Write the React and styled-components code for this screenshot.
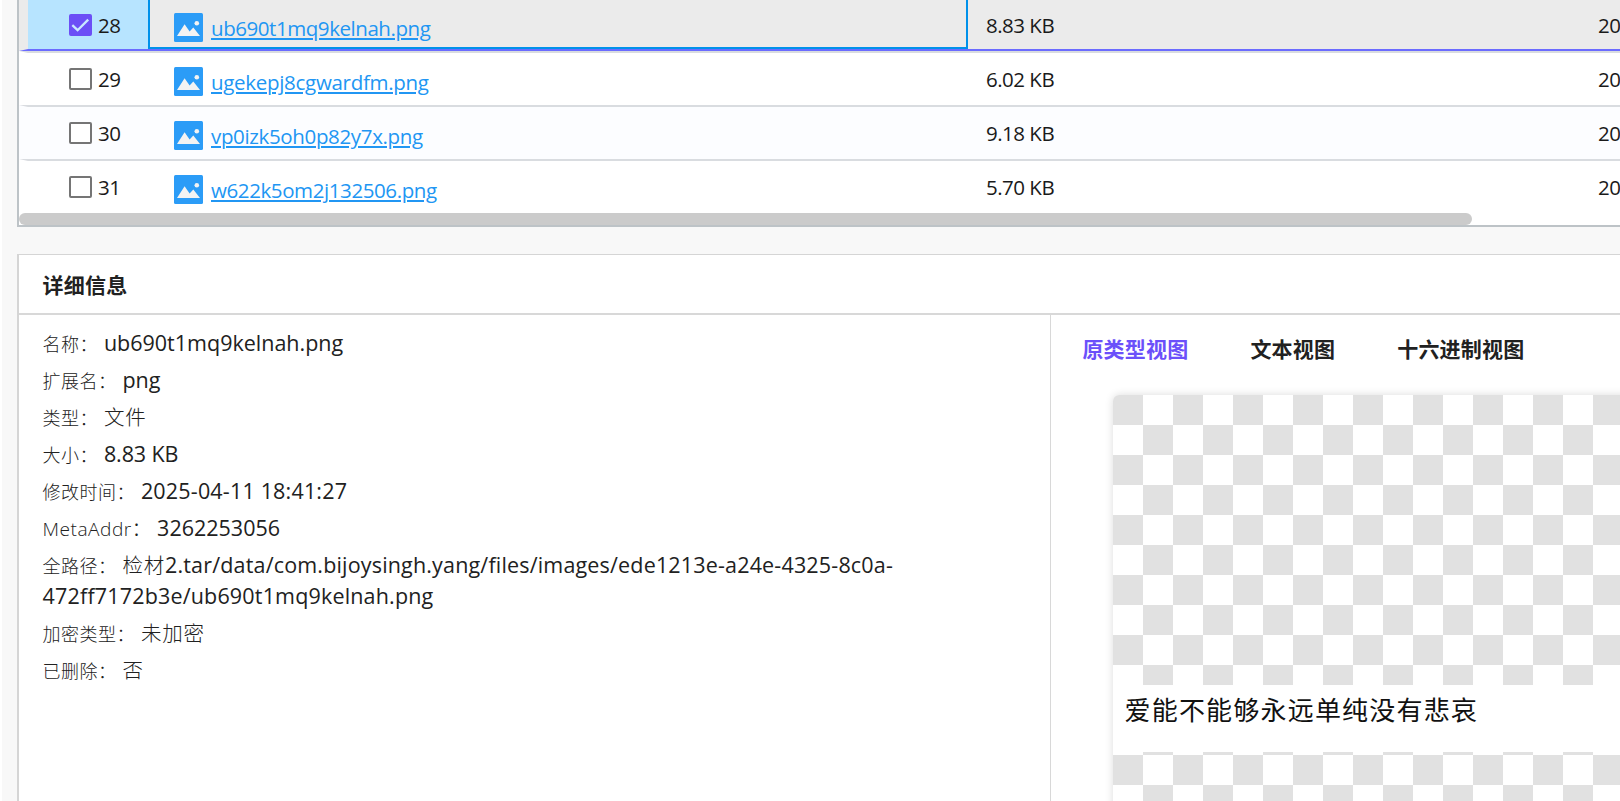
import React from 'react';
import styled, { createGlobalStyle, css } from 'styled-components';

const GlobalStyle = createGlobalStyle`
  * {
    box-sizing: border-box;
  }
  body {
    margin: 0;
    background-color: #fff;
    color: #212121;
    font-family: "Open Sans", "Noto Sans CJK SC", sans-serif;
    overflow: hidden;
  }
`;

const Page = styled.div`
  height: 801px;
  margin-left: 2px;
  padding-left: 15px;
  background-color: #f8f8f8;
  display: flex;
  flex-direction: column;
  overflow: hidden;
`;

const Grid = styled.div`
  height: 227px;
  flex-shrink: 0;
  background-color: #fff;
  border-left: 2px solid #bdc3c7;
  border-bottom: 2px solid #bdc3c7;
  display: flex;
  flex-direction: column;
  justify-content: flex-end;
  overflow: hidden;
`;

const Row = styled.div`
  height: 54px;
  flex-shrink: 0;
  display: flex;
  border-top: 2px solid #d9dce0;
  border-left: 9px solid transparent;
  background-color: ${props => (props.$odd ? '#fcfdff' : '#fff')};
  ${props => props.$selected && css`
    background-color: #ebebeb;
    border-bottom: 2px solid #6b6bff;
  `}
`;

const Cell = styled.div`
  display: flex;
  align-items: flex-start;
  flex-shrink: 0;
  width: ${props => props.$width}px;
  padding-left: ${props => props.$pad}px;
  background-color: ${props => props.$bg || 'transparent'};
  font-size: 20.5px;
  letter-spacing: -0.5px;
  line-height: 28px;
  color: #1a1a1a;
`;

const NameCell = styled(Cell)`
  border: 2px solid ${props => (props.$active ? '#0091ea' : 'transparent')};
  border-top: 0;
`;

const Checkbox = styled.span`
  width: 23px;
  height: 22px;
  margin: 15px 6px 0 0;
  flex-shrink: 0;
  border: 2px solid ${props => (props.$checked ? '#6c4ef6' : '#757575')};
  border-radius: 2px;
  background-color: ${props => (props.$checked ? '#6c4ef6' : '#fff')};
  svg {
    display: block;
  }
`;

const CellText = styled.span`
  margin-top: 12px;
`;

const FileLink = styled.a`
  margin: 15px 0 0 8px;
  color: #2196f3;
  letter-spacing: ${props => props.$spacing}px;
  text-decoration: underline;
  text-decoration-thickness: 2px;
  text-underline-offset: 2px;
`;

const Icon = styled.svg`
  display: block;
  flex-shrink: 0;
  margin-top: 14px;
`;

const ScrollTrack = styled.div`
  height: 12px;
  flex-shrink: 0;
`;

const ScrollThumb = styled.div`
  width: 1453px;
  height: 12px;
  border-radius: 6px;
  background-color: #cbcbcb;
`;

const Panel = styled.div`
  flex: 1;
  margin-top: 27px;
  background-color: #fff;
  border-top: 1px solid #d5d5d5;
  border-left: 2px solid #d5d5d5;
  display: flex;
  flex-direction: column;
`;

const PanelHeader = styled.div`
  height: 60px;
  flex-shrink: 0;
  padding: 15px 0 0 23.6px;
  border-bottom: 2px solid #d8d8d8;
  font-size: 21px;
  font-weight: 700;
  letter-spacing: 0.25px;
  line-height: 30px;
`;

const PanelBody = styled.div`
  flex: 1;
  display: flex;
  min-height: 0;
`;

const Details = styled.div`
  width: 1032px;
  flex-shrink: 0;
  padding: 12px 120px 0 23.6px;
  border-right: 1px solid #d8d8d8;
`;

const Item = styled.div`
  margin-bottom: 6px;
  font-size: 21.5px;
  line-height: 31px;
`;

const Label = styled.span`
  font-size: ${props => (props.$latin ? 19.1 : 18)}px;
  font-weight: 300;
  letter-spacing: 0.5px;
  line-height: 1;
  margin-right: 5.8px;
`;

const Value = styled.span`
  letter-spacing: ${props => props.$spacing ?? 0}px;
`;

const LightValue = styled.span`
  font-size: 20.5px;
  font-weight: 300;
  letter-spacing: 0.8px;
  line-height: 1;
`;

const Viewer = styled.div`
  flex: 1;
  min-width: 0;
  overflow: hidden;
`;

const Tabs = styled.div`
  display: flex;
  gap: 62px;
  height: 80px;
  padding: 19px 0 0 31.4px;
`;

const Tab = styled.div`
  flex-shrink: 0;
  color: ${props => (props.$active ? '#6b50fa' : '#212121')};
  font-size: 21px;
  font-weight: 700;
  letter-spacing: 0.2px;
  line-height: 30px;
`;

const Preview = styled.div`
  height: 440px;
  width: 600px;
  margin-left: 62px;
  padding-top: 290px;
  border-radius: 6px;
  box-shadow: 0 0 8px rgba(0, 0, 0, 0.14);
  background: repeating-conic-gradient(#fff 0 25%, #e1e1e1 0 50%) 0 0 / 60px 60px;
`;

const ImageText = styled.div`
  height: 67px;
  padding: 5px 0 0 11.5px;
  background-color: #fff;
  color: #111;
  font-family: "Noto Sans CJK SC", sans-serif;
  font-size: 26px;
  letter-spacing: 1.2px;
  line-height: 38px;
`;

const files = [
  { id: 28, name: 'ub690t1mq9kelnah.png', size: '8.83 KB', spacing: -0.44, selected: true },
  { id: 29, name: 'ugekepj8cgwardfm.png', size: '6.02 KB', spacing: -0.3 },
  { id: 30, name: 'vp0izk5oh0p82y7x.png', size: '9.18 KB', spacing: -0.35 },
  { id: 31, name: 'w622k5om2j132506.png', size: '5.70 KB', spacing: -0.4 },
];

const details = [
  { label: '名称：', value: 'ub690t1mq9kelnah.png' },
  { label: '扩展名：', value: 'png' },
  { label: '类型：', prefix: '文件' },
  { label: '大小：', value: '8.83 KB', spacing: -0.1 },
  { label: '修改时间：', value: '2025-04-11 18:41:27', spacing: 0.18 },
  { label: 'MetaAddr：', value: '3262253056', latin: true },
  {
    label: '全路径：',
    prefix: '检材',
    value: '2.tar/data/com.bijoysingh.yang/files/images/ede1213e-a24e-4325-8c0a-472ff7172b3e/ub690t1mq9kelnah.png',
    spacing: 0.17,
  },
  { label: '加密类型：', prefix: '未加密' },
  { label: '已删除：', prefix: '否' },
];

const tabs = ['原类型视图', '文本视图', '十六进制视图'];

const ImageIcon = () => (
  <Icon width="29" height="29" viewBox="0 0 29 29">
    <rect width="29" height="29" rx="1.5" fill="#2b9cf7" />
    <path d="M3 23 L10.6 11.3 L15.6 18.4 L19.3 14.6 L26 23 Z" fill="#f3f3f3" />
    <circle cx="22.8" cy="10.2" r="2.3" fill="#f3f3f3" />
  </Icon>
);

const Check = () => (
  <svg width="19" height="18" viewBox="0 0 19 18">
    <path d="M1.3 9.2 L6.6 14.2 L17.2 3.6" fill="none" stroke="#c9e8ff" strokeWidth="2.3" />
  </svg>
);

export default () => (
  <Page>
    <GlobalStyle />
    <Grid>
      {files.map((file, index) => (
        <Row key={file.id} $selected={file.selected} $odd={index === 2}>
          <Cell $width={120} $pad={41} $bg={file.selected && '#b7e4ff'}>
            <Checkbox $checked={file.selected}>{file.selected && <Check />}</Checkbox>
            <CellText>{file.id}</CellText>
          </Cell>
          <NameCell $width={820} $pad={24} $active={file.selected}>
            <ImageIcon />
            <FileLink $spacing={file.spacing}>{file.name}</FileLink>
          </NameCell>
          <Cell $width={612} $pad={18}>
            <CellText>{file.size}</CellText>
          </Cell>
          <Cell $width={40} $pad={18}>
            <CellText>20</CellText>
          </Cell>
        </Row>
      ))}
      <ScrollTrack>
        <ScrollThumb />
      </ScrollTrack>
    </Grid>
    <Panel>
      <PanelHeader>详细信息</PanelHeader>
      <PanelBody>
        <Details>
          {details.map(item => (
            <Item key={item.label}>
              <Label $latin={item.latin}>{item.label}</Label>
              {item.prefix && <LightValue>{item.prefix}</LightValue>}
              {item.value && <Value $spacing={item.spacing}>{item.value}</Value>}
            </Item>
          ))}
        </Details>
        <Viewer>
          <Tabs>
            {tabs.map((tab, index) => (
              <Tab key={tab} $active={index === 0}>{tab}</Tab>
            ))}
          </Tabs>
          <Preview>
            <ImageText>爱能不能够永远单纯没有悲哀</ImageText>
          </Preview>
        </Viewer>
      </PanelBody>
    </Panel>
  </Page>
);
